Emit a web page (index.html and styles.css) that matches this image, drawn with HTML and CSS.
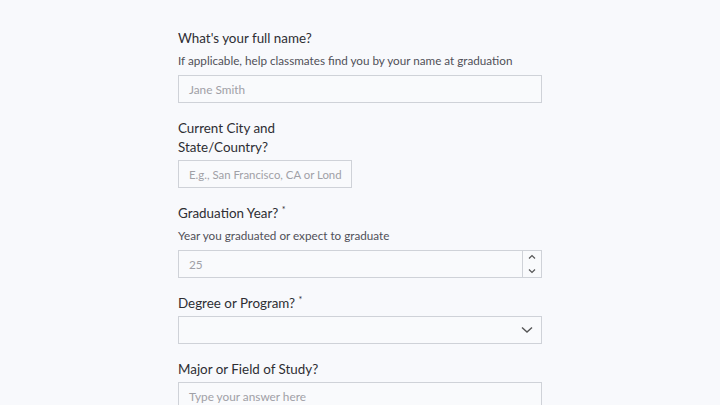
FILE: index.html
```html
<!DOCTYPE html>
<html>
<head>
<meta charset="utf-8">
<link rel="stylesheet" href="styles.css">
</head>
<body>
<form class="form">
  <div class="field">
    <label class="label">What's your full name?</label>
    <p class="desc">If applicable, help classmates find you by your name at graduation</p>
    <div class="input"><span class="ph">Jane Smith</span></div>
  </div>
  <div class="field">
    <label class="label narrow">Current City and State/Country?</label>
    <div class="input short"><span class="ph">E.g., San Francisco, CA or Lond</span></div>
  </div>
  <div class="field">
    <label class="label">Graduation Year? <sup class="req">*</sup></label>
    <p class="desc">Year you graduated or expect to graduate</p>
    <div class="input number">
      <span class="ph">25</span>
      <span class="spin">
        <svg width="10" height="26" viewBox="0 0 10 26"><path d="M2 7.5 L5 4.5 L8 7.5" fill="none" stroke="#555" stroke-width="1.2"/><path d="M2 18.5 L5 21.5 L8 18.5" fill="none" stroke="#555" stroke-width="1.2"/></svg>
      </span>
    </div>
  </div>
  <div class="field">
    <label class="label">Degree or Program? <sup class="req">*</sup></label>
    <div class="input select">
      <span class="ph"></span>
      <svg class="chev" width="12" height="8" viewBox="0 0 12 8"><path d="M1 1.5 L6 6 L11 1.5" fill="none" stroke="#555" stroke-width="1.4"/></svg>
    </div>
  </div>
  <div class="field">
    <label class="label">Major or Field of Study?</label>
    <div class="input"><span class="ph">Type your answer here</span></div>
  </div>
</form>
</body>
</html>
```
FILE: styles.css
```css
html, body {
  margin: 0;
  padding: 0;
  background: #f8f9fc;
  font-family: "Lato", "Open Sans", sans-serif;
}
.form {
  width: 364px;
  padding: 28.5px 0 0 0;
  margin-left: 178px;
  box-sizing: border-box;
}
.field {
  margin-bottom: 15.5px;
}
.label {
  display: block;
  font-size: 13.4px;
  line-height: 19px;
  color: #2e2e33;
  margin-bottom: 3.5px;
}
.label.narrow {
  width: 120px;
}
.req {
  font-size: 9px;
  vertical-align: top;
  position: relative;
  top: -4px;
}
.desc {
  margin: 0 0 6px 0;
  font-size: 11.7px;
  line-height: 18px;
  color: #505058;
}
.input {
  height: 28px;
  box-sizing: border-box;
  border: 1px solid #cfd2d8;
  background: #f9fafc;
  display: flex;
  align-items: center;
  padding: 0 10px;
  font-size: 11.8px;
  color: #a0a0a6;
}
.input.short {
  width: 174px;
  white-space: nowrap;
}
.input.short .ph {
  font-size: 11.4px;
}
.ph {
  flex: 1;
  white-space: nowrap;
}
.number {
  padding-right: 0;
}
.spin {
  width: 18px;
  height: 26px;
  border-left: 1px solid #cfd2d8;
  display: flex;
  justify-content: center;
}
.select {
  padding-right: 8px;
}
.chev {
  display: block;
}
```
